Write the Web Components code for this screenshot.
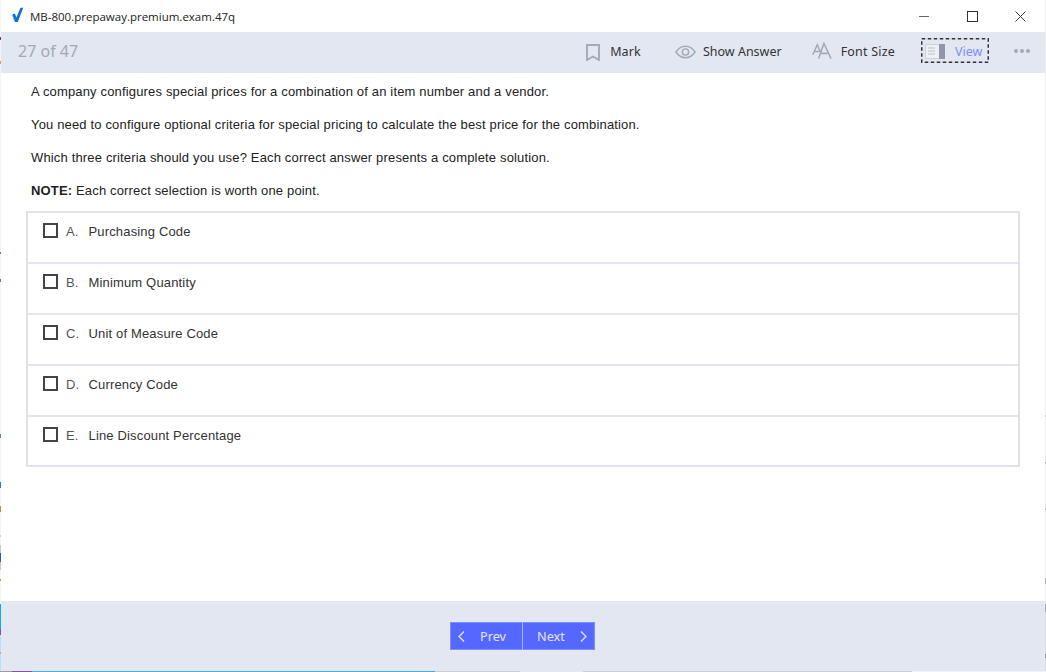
<!DOCTYPE html>
<html><head><meta charset="utf-8"><style>
html,body{margin:0;padding:0;background:#fff}
body{width:1046px;height:672px;overflow:hidden;font-family:"Liberation Sans",sans-serif}
</style></head><body>
<exam-window>
<title-bar slot="title">MB-800.prepaway.premium.exam.47q</title-bar>
<tool-bar slot="tools"></tool-bar>
<question-body slot="body">
<p>A company configures special prices for a combination of an item number and a vendor.</p>
<p>You need to configure optional criteria for special pricing to calculate the best price for the combination.</p>
<p>Which three criteria should you use? Each correct answer presents a complete solution.</p>
<p><b>NOTE:</b> Each correct selection is worth one point.</p>
<answer-list>
<answer-row letter="A.">Purchasing Code</answer-row>
<answer-row letter="B.">Minimum Quantity</answer-row>
<answer-row letter="C.">Unit of Measure Code</answer-row>
<answer-row letter="D.">Currency Code</answer-row>
<answer-row letter="E." class="last">Line Discount Percentage</answer-row>
</answer-list>
</question-body>
<nav-bar slot="nav"></nav-bar>
</exam-window>
<script>
function def(name,html,init){customElements.define(name,class extends HTMLElement{
constructor(){super();this.attachShadow({mode:'open'}).innerHTML=html;}
connectedCallback(){if(init)init(this);}
});}
const edge='linear-gradient(180deg,#f3f3f5 0 37px,#7a3b5a 37px 40px,#f3f3f5 40px 61px,#d9a060 61px 64px,#f3f3f5 64px 252px,#4a7fc0 252px 254px,#f3f3f5 254px 279px,#4a7fc0 279px 282px,#f3f3f5 282px 434px,#5a80c0 434px 438px,#f3f3f5 438px 482px,#1a80d0 482px 488px,#f3f3f5 488px 506px,#c08a50 506px 512px,#f3f3f5 512px 535px,#a0e0f0 535px 537px,#f3f3f5 537px 545px,#c8c8cc 545px 553px,#2a5a9a 553px 562px,#c8c8cc 562px 570px,#f3f3f5 570px 579px,#d09050 579px 581px,#f3f3f5 581px 604px,#10a8f0 604px 629px,#8a4f9e 629px 635px,#b8e0f4 635px 652px,#d9a060 652px 654px,#b8e0f4 654px 671px,#f3f3f5 671px)';
const right='linear-gradient(180deg,#eee 0 415px,#bbb 415px 417px,#eee 417px 462px,#bbb 462px 464px,#eee 464px 508px,#bbb 508px 510px,#eee 510px 578px,#aaa 578px 584px,#eee 584px 604px,#aaa 604px 612px,#ddd 612px 654px,#999 654px 658px,#ddd 658px 672px)';
const bottom='linear-gradient(90deg,#9a9aa0 0 12px,#8a4f9e 12px 32px,#3fb0e0 32px 435px,#cfcfd2 435px 520px,#e8e8ea 520px 583px,#cfcfd2 583px 912px,#f2f2f2 912px 100%)';
def('exam-window',`<style>:host{display:flex;flex-direction:column;width:1046px;height:672px;box-sizing:border-box;padding:0 1px 1px 1px;
background:${bottom} bottom/100% 1px no-repeat,${edge} left/1px 100% no-repeat,${right} right/1px 100% no-repeat,#fff}
.m{flex:1;min-height:0}</style><slot name="title"></slot><slot name="tools"></slot><div class="m"><slot name="body"></slot></div><slot name="nav"></slot>`);
def('title-bar',`<style>:host{display:flex;align-items:center;height:32px;flex:none;font:11.5px "Open Sans",sans-serif;color:#222}
svg{display:block;flex:none}
.ic{margin:0 6px 2px 10px}
.t{flex:1}
.b{width:46px;height:32px;display:flex;align-items:center;justify-content:center}
</style>
<svg class="ic" width="13" height="16" viewBox="0 0 13 16"><path d="M0.500 8L2.800 7L4.500 12L4.300 15L3.400 15Z" fill="#9fd0f5"/><path d="M1.500 7.500L3.800 6.500L5.500 10.500L9.500 0.800L12.200 0.800L6.800 15L4.300 15Z" fill="#0b6fd6"/></svg>
<span class="t"><slot></slot></span>
<div class="b" style="margin-right:2px"><svg width="10" height="10"><path d="M0 5.500H10" stroke="#666" stroke-width="1"/></svg></div>
<div class="b" style="margin-right:2px"><svg width="11" height="11"><rect x=".5" y=".5" width="10" height="10" fill="none" stroke="#333"/></svg></div>
<div class="b" style="margin-right:2px"><svg width="11" height="11"><path d="M.5.5L10.500 10.500M10.500.5L.5 10.500" stroke="#333"/></svg></div>`);
def('tool-bar',`<style>:host{display:flex;align-items:center;height:41px;flex:none;background:#e3e7f1;font:12.5px "Noto Sans",sans-serif;color:#333;padding-bottom:3px;box-sizing:border-box}
.n{font-size:16px;color:#a3a9b5;margin-left:17px;flex:1}
.i{display:flex;align-items:center}
svg{display:block;flex:none}
.v{position:relative;height:25px;box-sizing:border-box;width:68px;display:flex;align-items:center;color:#7b8cff;padding:2px 0 0 4px;margin-bottom:2px}
.v svg.d{position:absolute;left:0;top:0}
</style>
<span class="n">27 of 47</span>
<div class="i"><svg style="margin-top:3px" width="14" height="17" viewBox="0 0 14 17"><path d="M1 1H13V16L7 12.500L1 16Z" fill="none" stroke="#a3a9b5" stroke-width="1.900"/></svg><span style="margin-left:10px;letter-spacing:.15px">Mark</span></div>
<div class="i" style="margin-left:34px"><svg style="margin-top:1px" width="21" height="14" viewBox="0 0 22 14"><path d="M1 7C4 2.500 7.500 1 11 1S18 2.500 21 7C18 11.500 14.500 13 11 13S4 11.500 1 7Z" fill="none" stroke="#a3a9b5" stroke-width="1.500"/><circle cx="11" cy="7" r="3.300" fill="none" stroke="#a3a9b5" stroke-width="1.500"/></svg><span style="margin-left:7px">Show Answer</span></div>
<div class="i" style="margin-left:30px"><svg width="20" height="18" viewBox="0 0 21 18"><path d="M.8 13L5.500 2.500L9 10M2.500 9.500H8M7 17L12.500 1L20 17M9.500 11.500H16.500" fill="none" stroke="#a3a9b5" stroke-width="1.600"/></svg><span style="margin-left:9px;letter-spacing:.2px">Font Size</span></div>
<div class="v" style="margin-left:26px"><svg class="d" width="68" height="25"><rect x=".75" y=".75" width="66.500" height="23.500" fill="none" stroke="#333" stroke-width="1.500" stroke-dasharray="3.500 2.500"/></svg><svg width="20" height="15" viewBox="0 0 20 15"><rect x=".5" y=".5" width="19" height="14" fill="#eef0f5" stroke="#cdd2dd"/><rect x="14" width="6" height="15" fill="#8f97a8"/><path d="M3 4H10M3 7H10M3 10H10" stroke="#bcc2ce" stroke-width="1"/></svg><span style="margin-left:10px">View</span></div>
<svg style="margin:0 15px 0 25px" width="16" height="4"><g fill="#a3a9b5"><circle cx="2" cy="2" r="2"/><circle cx="8" cy="2" r="2"/><circle cx="14" cy="2" r="2"/></g></svg>`);
def('question-body',`<style>:host{display:block;padding:0 25px 0 25px;font:13px/17px "Liberation Sans",sans-serif;color:#222;letter-spacing:.16px}
::slotted(p){margin:0 0 16px 5px}
::slotted(p:first-of-type){margin-top:10px}
::slotted(answer-list){margin-top:-4px}</style><slot></slot>`);
def('answer-list',`<style>:host{display:block;border:2px solid #dfe2ee;box-sizing:border-box;height:256px}</style><slot></slot>`);
def('answer-row',`<style>:host{display:flex;align-items:flex-start;height:51px;box-sizing:border-box;border-bottom:2px solid #e3e6f0;padding:10px 0 0 15px;color:#333}
:host(.last){border-bottom:0}
.c{width:15px;height:15px;box-sizing:border-box;border:2px solid #444;background:#fff;flex:none}
.l{width:22.500px;margin-left:8px;color:#555}
</style><div class="c"></div><span class="l"></span><slot></slot>`,el=>{el.shadowRoot.querySelector('.l').textContent=el.getAttribute('letter');});
def('nav-bar',`<style>:host{display:flex;align-items:center;justify-content:center;height:70px;flex:none;background:#e3e7f1;font:12.7px "Noto Sans",sans-serif;color:#e2e6ff;padding:0 1px 0 0;box-sizing:border-box}
.b{display:flex;align-items:center;justify-content:space-between;box-sizing:border-box;width:73px;height:28px;background:#5468ff;border:1px solid #7f8fff;border-right-color:#aab4ff;padding:0 7px}
.b+.b{border-left:0;width:72px;border-right-color:#7f8fff}
svg{display:block}
.t{margin:0 10px}</style>
<div class="b"><svg width="7" height="11"><path d="M6 .5L1 5.500L6 10.500" fill="none" stroke="#e2e6ff" stroke-width="1.300"/></svg><span class="t" style="margin-right:9px">Prev</span></div>
<div class="b"><span class="t" style="margin-left:7px">Next</span><svg width="7" height="11"><path d="M1 .5L6 5.500L1 10.500" fill="none" stroke="#e2e6ff" stroke-width="1.300"/></svg></div>`);
</script>
</body></html>
